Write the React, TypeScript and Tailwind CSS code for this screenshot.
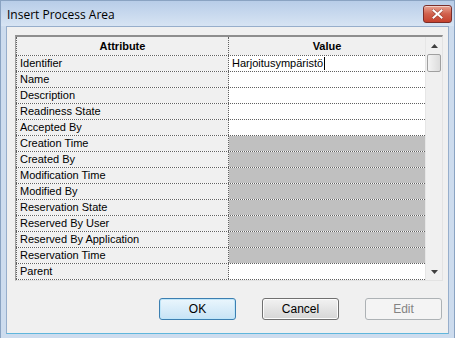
import React from "react";

const ROWS = [
  { name: "Identifier", value: "Harjoitusympäristö", editing: true },
  { name: "Name" },
  { name: "Description" },
  { name: "Readiness State" },
  { name: "Accepted By" },
  { name: "Creation Time", locked: true },
  { name: "Created By", locked: true },
  { name: "Modification Time", locked: true },
  { name: "Modified By", locked: true },
  { name: "Reservation State", locked: true },
  { name: "Reserved By User", locked: true },
  { name: "Reserved By Application", locked: true },
  { name: "Reservation Time", locked: true },
  { name: "Parent" },
];

function CloseButton() {
  return (
    <div className="flex h-[18px] w-[29px] items-center justify-center rounded-[3px] border border-[#7a2e2a] bg-gradient-to-b from-[#e8a393] via-[#d0604c] to-[#c5412e] shadow-[inset_0_1px_0_rgba(255,255,255,0.5)]">
      <svg width="11" height="10" viewBox="0 0 11 10">
        <path d="M1.5 1.5 L9.5 8.5 M9.5 1.5 L1.5 8.5" stroke="#5a1d16" strokeWidth="3.2" strokeLinecap="square" opacity="0.45" />
        <path d="M1.5 1.5 L9.5 8.5 M9.5 1.5 L1.5 8.5" stroke="#ffffff" strokeWidth="2" strokeLinecap="square" />
      </svg>
    </div>
  );
}

function Scrollbar() {
  return (
    <div className="flex w-[17px] flex-col bg-[#f0f0f0] border-l border-[#e6e6e6]">
      <div className="flex h-[17px] items-center justify-center">
        <svg width="7" height="4" viewBox="0 0 7 4">
          <path d="M3.5 0 L7 4 L0 4 Z" fill="#404040" />
        </svg>
      </div>
      <div className="mx-[1px] h-[18px] rounded-[2px] border border-[#a0a0a0] bg-gradient-to-r from-[#f4f4f4] to-[#dcdcdc]" />
      <div className="flex-1" />
      <div className="flex h-[17px] items-center justify-center">
        <svg width="7" height="4" viewBox="0 0 7 4">
          <path d="M0 0 L7 0 L3.5 4 Z" fill="#404040" />
        </svg>
      </div>
    </div>
  );
}

function Button({ label, variant }: { label: string; variant: "default" | "normal" | "disabled" }) {
  const styles = {
    default:
      "border-[#3c7fb1] bg-gradient-to-b from-[#eaf6fd] to-[#c7e3f5] text-black shadow-[inset_0_0_0_1px_#bfe6f9]",
    normal: "border-[#707070] bg-gradient-to-b from-[#f2f2f2] to-[#d6d6d6] text-black shadow-[inset_0_0_0_1px_#fcfcfc]",
    disabled: "border-[#adb2b5] bg-[#f4f4f4] text-[#838383]",
  }[variant];
  return (
    <div className={`flex h-[22px] w-[77px] items-center justify-center rounded-[3px] border text-[12px] ${styles}`}>
      {label}
    </div>
  );
}

export default function App() {
  return (
    <div className="flex h-[338px] w-[455px] flex-col border-x border-t border-[#8aa3c2] bg-[#cddcee] font-['Liberation_Sans',Arial,sans-serif] text-black">
      <div className="flex h-[25px] items-center justify-between bg-gradient-to-b from-[#b8cde8] to-[#d7e4f3] pl-[6px] pr-[2px]">
        <span className="pt-[2px] font-['Open_Sans',sans-serif] text-[12px]">Insert Process Area</span>
        <CloseButton />
      </div>

      <div className="mx-[5px] mb-[4px] flex flex-1 flex-col border border-[#97aecb] border-b-[#5fb6dc] bg-[#f0f0f0] pl-[8px] pr-[5px] pt-[8px]">
        <div className="flex w-[428px] border-t-2 border-l border-r border-b border-t-[#8e8e8e] border-l-[#a0a0a0] border-r-[#e3e3e3] border-b-[#e3e3e3] bg-white">
          <div className="flex w-[409px] flex-col text-[11px]">
            <div className="flex h-[19px] border-b border-dotted border-[#606060]">
              <div className="flex w-[213px] items-center justify-center border-r border-l border-dotted border-[#606060] bg-[#f0f0f0] font-bold">
                Attribute
              </div>
              <div className="flex flex-1 items-center justify-center bg-[#f0f0f0] font-bold">Value</div>
            </div>
            {ROWS.map((row) => (
              <div key={row.name} className="flex h-[16px] border-b border-dotted border-[#606060]">
                <div className="flex w-[213px] items-center border-r border-l border-dotted border-[#606060] bg-[#f0f0f0] pl-[3px]">
                  {row.name}
                </div>
                <div className={`flex flex-1 items-center pl-[3px] ${row.locked ? "bg-[#c0c0c0]" : "bg-white"}`}>
                  {row.value}
                  {row.editing && <span className="ml-[1px] h-[13px] w-[1px] bg-black" />}
                </div>
              </div>
            ))}
          </div>
          <Scrollbar />
        </div>

        <div className="mt-[17px] flex gap-[26px] pl-[144px]">
          <Button label="OK" variant="default" />
          <Button label="Cancel" variant="normal" />
          <Button label="Edit" variant="disabled" />
        </div>
      </div>
    </div>
  );
}
